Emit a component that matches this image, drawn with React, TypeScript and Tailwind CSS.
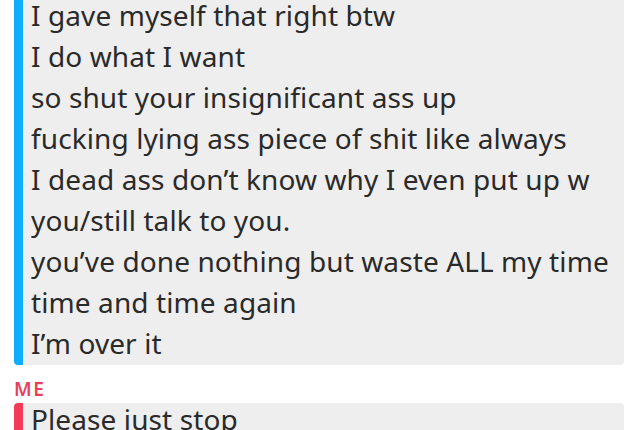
import React from "react";

const lines = [
  "I gave myself that right btw",
  "I do what I want",
  "so shut your insignificant ass up",
  "fucking lying ass piece of shit like always",
  "I dead ass don\u2019t know why I even put up w",
  "you/still talk to you.",
  "you\u2019ve done nothing but waste ALL my time",
  "time and time again",
  "I\u2019m over it",
];

export default function App() {
  return (
    <div
      className="w-[640px] h-[430px] overflow-hidden bg-white"
      style={{ fontFamily: "'Noto Sans', Lato, sans-serif" }}
    >
      <div className="pl-[14px] w-[624px] -mt-[9px]">
        <div className="flex">
          <div className="w-[9px] bg-[#0eadff] rounded-bl-[4px]" />
          <div className="flex-1 bg-[#eeeeee] rounded-r-[4px] pl-[8px] pb-[1px] pt-[4px] text-[28px] leading-[41px] tracking-[0.1px] text-[#2a2a2a]">
            {lines.map((l, i) => (
              <div key={i} className="whitespace-nowrap">{l}</div>
            ))}
          </div>
        </div>
        <div className="pt-[15px] pb-[5px] text-[19px] leading-[18px] font-semibold tracking-[1.5px] text-[#e83f5b]">
          ME
        </div>
        <div className="flex">
          <div className="w-[9px] bg-[#f23c57] rounded-tl-[4px]" />
          <div className="flex-1 bg-[#eeeeee] rounded-r-[4px] pl-[8px] pt-[1px] text-[28px] leading-[31px] tracking-[0.1px] text-[#2a2a2a]">
            Please just stop
          </div>
        </div>
      </div>
    </div>
  );
}
